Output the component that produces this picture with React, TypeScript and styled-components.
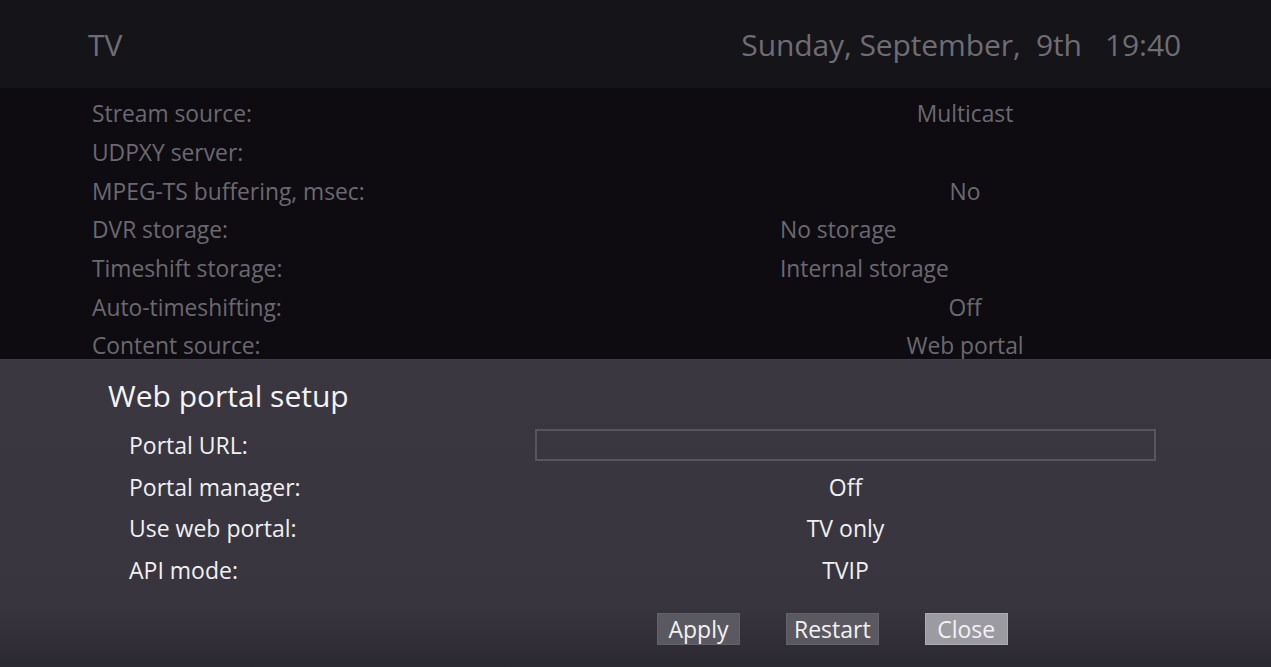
import React from "react";
import styled, { createGlobalStyle } from "styled-components";

const GlobalStyle = createGlobalStyle`
  html, body {
    margin: 0;
    padding: 0;
    background: #0e0c11;
  }
  body {
    font-family: "Open Sans", "Noto Sans", sans-serif;
  }
`;

const Screen = styled.div`
  width: 1271px;
  height: 667px;
  overflow: hidden;
  display: flex;
  flex-direction: column;
  background: #0e0c11;
`;

const Header = styled.div`
  height: 88px;
  flex-shrink: 0;
  display: flex;
  align-items: center;
  justify-content: space-between;
  padding: 0 90px 0 88px;
  background: #151419;
  color: #6f6d74;
  font-size: 30px;
  letter-spacing: -0.1px;
`;

const Clock = styled.div`
  white-space: pre;
`;

const SettingsList = styled.div`
  height: 271px;
  flex-shrink: 0;
  padding: 7px 0 0 92px;
  box-sizing: border-box;
`;

const SettingRow = styled.div`
  display: grid;
  grid-template-columns: 688px 370px;
  height: 38.7px;
  align-items: center;
  font-size: 22.8px;
  line-height: 24px;
  color: #6b6970;
`;

const SettingValue = styled.div<{ $align: "left" | "center" }>`
  text-align: ${(p) => p.$align};
`;

const Dialog = styled.div`
  flex: 1;
  display: flex;
  flex-direction: column;
  padding: 17px 0 0 108px;
  background: linear-gradient(#3a3741 0%, #38353f 80%, #2b2930 100%);
  border-top: 1px solid #403d46;
`;

const DialogTitle = styled.div`
  font-size: 30px;
  line-height: 38px;
  color: #f4f4f6;
  margin-bottom: 9px;
`;

const FieldRow = styled.div`
  display: grid;
  grid-template-columns: 406px 621px;
  height: 41.8px;
  align-items: center;
  padding-left: 21px;
  font-size: 23px;
  color: #f0f0f2;
`;

const FieldValue = styled.div`
  text-align: center;
`;

const TextInput = styled.div`
  height: 32px;
  box-sizing: border-box;
  border: 2px solid #58555e;
`;

const ButtonBar = styled.div`
  display: flex;
  gap: 46px;
  padding-left: 549px;
  margin-top: 22px;
`;

const Button = styled.div<{ $focused?: boolean }>`
  min-width: 83px;
  height: 32px;
  box-sizing: border-box;
  padding: 0 7px;
  display: flex;
  align-items: center;
  justify-content: center;
  font-size: 23px;
  color: #f2f2f4;
  background: ${(p) => (p.$focused ? "#9d9ba2" : "#5a5860")};
  border: 1px solid ${(p) => (p.$focused ? "#aeacb3" : "#636169")};
`;

const settings: { label: string; value: string; align: "left" | "center" }[] = [
  { label: "Stream source:", value: "Multicast", align: "center" },
  { label: "UDPXY server:", value: "", align: "center" },
  { label: "MPEG-TS buffering, msec:", value: "No", align: "center" },
  { label: "DVR storage:", value: "No storage", align: "left" },
  { label: "Timeshift storage:", value: "Internal storage", align: "left" },
  { label: "Auto-timeshifting:", value: "Off", align: "center" },
  { label: "Content source:", value: "Web portal", align: "center" },
];

const portalFields = [
  { label: "Portal manager:", value: "Off" },
  { label: "Use web portal:", value: "TV only" },
  { label: "API mode:", value: "TVIP" },
];

const App: React.FC = () => {
  return (
    <>
      <GlobalStyle />
      <Screen>
        <Header>
          <div>TV</div>
          <Clock>{"Sunday, September,  9th   19:40"}</Clock>
        </Header>

        <SettingsList>
          {settings.map((s) => (
            <SettingRow key={s.label}>
              <div>{s.label}</div>
              <SettingValue $align={s.align}>{s.value}</SettingValue>
            </SettingRow>
          ))}
        </SettingsList>

        <Dialog>
          <DialogTitle>Web portal setup</DialogTitle>
          <FieldRow>
            <div>Portal URL:</div>
            <TextInput />
          </FieldRow>
          {portalFields.map((f) => (
            <FieldRow key={f.label}>
              <div>{f.label}</div>
              <FieldValue>{f.value}</FieldValue>
            </FieldRow>
          ))}
          <ButtonBar>
            <Button>Apply</Button>
            <Button>Restart</Button>
            <Button $focused>Close</Button>
          </ButtonBar>
        </Dialog>
      </Screen>
    </>
  );
};

export default App;
